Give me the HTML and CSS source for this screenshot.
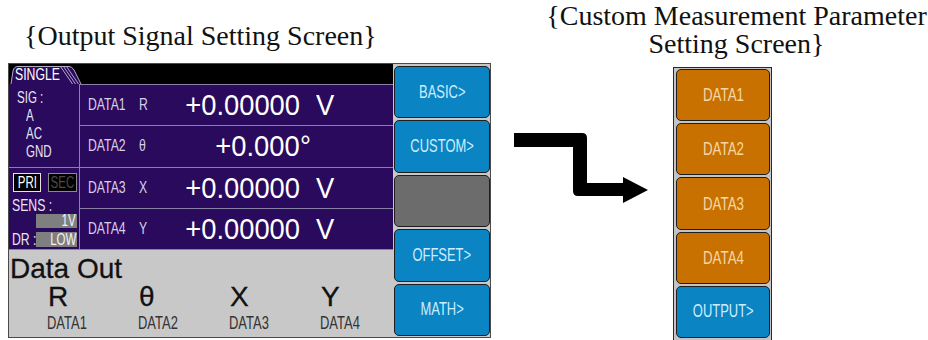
FILE: index.html
```html
<!DOCTYPE html>
<html>
<head>
<meta charset="utf-8">
<link rel="stylesheet" href="styles.css">
</head>
<body>
<div class="page">
  <h2 class="title title-left">{Output Signal Setting Screen}</h2>
  <h2 class="title title-right">{Custom Measurement Parameter<br>Setting Screen}</h2>

  <div class="screen">
    <div class="main">
      <div class="topbar">
        <div class="tab">
          <svg class="tab-bg" width="72" height="18" viewBox="0 0 72 18">
            <path d="M1,18 L3,5 Q4,0.5 8,0.5 L59,0.5 Q62,0.5 64,4 L71,18" fill="#2a0a5c" stroke="#b4acc9" stroke-width="1"/>
            <path d="M50.5,0.5 L62.5,18 M53.5,0.5 L65.5,18 M56.5,0.5 L68.5,18" stroke="#b4acc9" stroke-width="1" fill="none"/>
          </svg>
          <span class="tab-text cn">SINGLE</span>
        </div>
      </div>
      <div class="rows">
        <div class="side">
          <div class="side-top">
            <div class="sl"><span class="cn">SIG :</span></div>
            <div class="sl sl-in"><span class="cn">A</span></div>
            <div class="sl sl-in"><span class="cn">AC</span></div>
            <div class="sl sl-in"><span class="cn">GND</span></div>
          </div>
          <div class="side-bot">
            <div class="prisec">
              <span class="ps ps-on"><span class="cn">PRI</span></span>
              <span class="ps ps-off"><span class="cn">SEC</span></span>
            </div>
            <div class="sens"><span class="cn">SENS :</span></div>
            <div class="fieldrow"><span class="lbl"></span><span class="field"><span class="cn">1V</span></span></div>
            <div class="fieldrow dr"><span class="lbl"><span class="cn">DR :</span></span><span class="field field-low"><span class="cn">LOW</span></span></div>
          </div>
        </div>
        <div class="data">
          <div class="drow">
            <span class="dlabel"><span class="cn">DATA1</span></span>
            <span class="dsym"><span class="cn">R</span></span>
            <span class="dval"><span class="num">+0.00000</span></span>
            <span class="dunit dunit-v"><span class="unit">V</span></span>
          </div>
          <div class="drow">
            <span class="dlabel"><span class="cn">DATA2</span></span>
            <span class="dsym"><span class="cn">θ</span></span>
            <span class="dval"><span class="num">+0.000</span></span>
            <span class="dunit"><span class="unit">°</span></span>
          </div>
          <div class="drow">
            <span class="dlabel"><span class="cn">DATA3</span></span>
            <span class="dsym"><span class="cn">X</span></span>
            <span class="dval"><span class="num">+0.00000</span></span>
            <span class="dunit dunit-v"><span class="unit">V</span></span>
          </div>
          <div class="drow">
            <span class="dlabel"><span class="cn">DATA4</span></span>
            <span class="dsym"><span class="cn">Y</span></span>
            <span class="dval"><span class="num">+0.00000</span></span>
            <span class="dunit dunit-v"><span class="unit">V</span></span>
          </div>
        </div>
      </div>
      <div class="out">
        <div class="out-title">Data Out</div>
        <div class="cols">
          <div class="col"><div class="col-letter">R</div><div class="col-label"><span class="cn">DATA1</span></div></div>
          <div class="col"><div class="col-letter">θ</div><div class="col-label"><span class="cn">DATA2</span></div></div>
          <div class="col"><div class="col-letter">X</div><div class="col-label"><span class="cn">DATA3</span></div></div>
          <div class="col"><div class="col-letter">Y</div><div class="col-label"><span class="cn">DATA4</span></div></div>
        </div>
      </div>
    </div>
    <div class="keys">
      <div class="key"><span class="cn">BASIC&gt;</span></div>
      <div class="key"><span class="cn">CUSTOM&gt;</span></div>
      <div class="key key-gray"></div>
      <div class="key"><span class="cn">OFFSET&gt;</span></div>
      <div class="key"><span class="cn">MATH&gt;</span></div>
    </div>
  </div>

  <div class="arrow">
    <svg width="182" height="150" viewBox="491 63 182 150">
      <path d="M514,133 H582 Q587,133 587,138 V183 H623 V177 L648,190 L623,203 V196 H578 Q573,196 573,191 V147 H514 Z" fill="#000"/>
    </svg>
  </div>

  <div class="panel">
    <div class="pkey"><span class="cn">DATA1</span></div>
    <div class="pkey"><span class="cn">DATA2</span></div>
    <div class="pkey"><span class="cn">DATA3</span></div>
    <div class="pkey"><span class="cn">DATA4</span></div>
    <div class="pkey pkey-blue"><span class="cn">OUTPUT&gt;</span></div>
  </div>
</div>
</body>
</html>
```

FILE: styles.css
```css
* { box-sizing: border-box; margin: 0; padding: 0; }

html, body {
  width: 928px;
  height: 340px;
  overflow: hidden;
  background: #fff;
}

body {
  font-family: "Liberation Sans", Arial, sans-serif;
}

.page {
  display: grid;
  grid-template-columns: 491px 182px 255px;
  grid-template-rows: 63px 277px;
}

.title {
  font-family: "Liberation Serif", "Times New Roman", serif;
  font-weight: normal;
  font-size: 28px;
  color: #111;
  white-space: nowrap;
}

.title-left {
  grid-column: 1;
  grid-row: 1;
  padding: 21px 0 0 24px;
  line-height: 30px;
}

.title-right {
  grid-column: 2 / 4;
  grid-row: 1;
  padding: 2px 0 0 54px;
  line-height: 28px;
  text-align: center;
}

.cn {
  display: inline-block;
  transform: scaleX(0.72);
  transform-origin: left center;
  white-space: nowrap;
}

/* ---------- left screen ---------- */
.screen {
  grid-column: 1;
  grid-row: 2;
  margin-left: 8px;
  width: 483px;
  height: 275px;
  border: 1px solid #4a4a4a;
  display: flex;
  background: #c8c8c8;
}

.main {
  width: 384px;
  display: flex;
  flex-direction: column;
}

.topbar {
  height: 20px;
  background: #000;
  display: flex;
}

.tab {
  position: relative;
  width: 72px;
  height: 18px;
  margin: 2px 0 0 1px;
  color: #fff;
}

.tab-bg {
  position: absolute;
  left: 0;
  top: 0;
}

.tab-text {
  position: relative;
  font-size: 17px;
  line-height: 18px;
  margin-left: 5px;
}

.rows {
  height: 166px;
  display: flex;
  background: #2a0a5c;
  border-bottom: 1px solid #8a82a6;
}

.side {
  width: 71px;
  border-right: 1px solid #8a82a6;
  display: flex;
  flex-direction: column;
  color: #e8e4f4;
}

.side-top {
  height: 84px;
  border-bottom: 1px solid #8a82a6;
  padding: 5px 0 0 8px;
}

.sl {
  font-size: 16px;
  line-height: 18px;
}

.sl-in { padding-left: 9px; }

.side-bot {
  flex: 1;
  padding: 5px 0 0 3px;
}

.prisec {
  display: flex;
  gap: 7px;
  margin-left: 1px;
  height: 19px;
}

.ps {
  display: flex;
  justify-content: center;
  align-items: center;
  width: 28px;
  height: 19px;
  background: #000;
  font-size: 16px;
}

.ps .cn { transform-origin: center; }

.ps-on {
  border: 1px solid #e4e4e4;
  color: #fff;
}

.ps-off {
  width: 29px;
  border: 1px solid #8a8a8a;
  color: #4a4a4a;
}

.sens {
  margin-top: 6px;
  font-size: 17px;
  line-height: 16px;
}

.fieldrow {
  display: flex;
  align-items: center;
}

.lbl {
  width: 24px;
  font-size: 17px;
  line-height: 15px;
}

.field {
  width: 41px;
  height: 14px;
  background: #7f7f7f;
  color: #f4f4f4;
  font-size: 16px;
  line-height: 14px;
  text-align: right;
  padding-right: 1px;
}

.field .cn { transform-origin: right center; }

.field-low {
  height: 15px;
  line-height: 15px;
}

.dr { margin-top: 4px; }

.data {
  flex: 1;
  border-top: 1px solid #8a82a6;
  display: flex;
  flex-direction: column;
}

.drow {
  flex: 1;
  display: flex;
  align-items: center;
  padding-left: 8px;
  color: #d6cfe9;
  border-bottom: 1px solid #8a82a6;
}

.drow:last-child { border-bottom: none; }

.dlabel {
  width: 51px;
  font-size: 17px;
}

.dsym {
  width: 20px;
  font-size: 17px;
}

.dval {
  width: 141px;
  text-align: right;
  font-size: 30px;
  line-height: 34px;
  color: #fff;
}

.num {
  display: inline-block;
  transform: scaleX(0.91);
  transform-origin: right center;
}

.dunit {
  font-size: 30px;
  line-height: 34px;
  color: #fff;
}

.unit {
  display: inline-block;
  transform: scaleX(0.91);
  transform-origin: left center;
}

.dunit-v { margin-left: 16px; }

.out {
  flex: 1;
  background: #c8c8c8;
  padding: 4px 0 0 1px;
  color: #111;
}

.out-title {
  font-size: 28px;
  line-height: 30px;
  -webkit-text-stroke: 0.3px #111;
}

.cols {
  display: grid;
  grid-template-columns: repeat(4, 91px);
  margin-left: 37px;
  margin-top: 1px;
}

.col-letter {
  font-size: 28px;
  line-height: 24px;
  margin-left: 1px;
  -webkit-text-stroke: 0.3px #111;
}

.col-label {
  font-size: 18px;
  line-height: 18px;
  margin-top: 5px;
  color: #333;
}

/* ---------- soft keys ---------- */
.keys {
  width: 97px;
  display: flex;
  flex-direction: column;
  gap: 2px;
  padding: 2px 0 1px 1px;
  background: #c8c8c8;
}

.key {
  flex: 1;
  border: 1px solid #1e1e1e;
  border-radius: 5px;
  background: #0a84c2;
  color: #cdeeff;
  display: flex;
  align-items: center;
  justify-content: center;
  font-size: 18px;
}

.key-gray { background: #6c6c6c; }

.key .cn, .pkey .cn { transform-origin: center; }

/* ---------- arrow ---------- */
.arrow {
  grid-column: 2;
  grid-row: 2;
}

.arrow svg { display: block; }

/* ---------- right panel ---------- */
.panel {
  grid-column: 3;
  grid-row: 2;
  margin-top: 4px;
  width: 99px;
  height: 273px;
  border: 1px solid #2a2a2a;
  border-bottom: none;
  padding: 1px 1px 2px 2px;
  background: #c4c4c4;
  display: flex;
  flex-direction: column;
  gap: 2px;
}

.pkey {
  flex: 1;
  border: 1px solid #1e1e1e;
  border-radius: 5px;
  background: #c87100;
  color: #f6d7a6;
  display: flex;
  align-items: center;
  justify-content: center;
  font-size: 18.5px;
}

.pkey-blue {
  background: #0a84c2;
  color: #cdeeff;
  font-size: 18px;
}
```
